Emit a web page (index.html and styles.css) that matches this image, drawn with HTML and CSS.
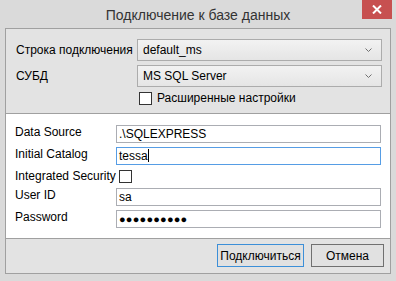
FILE: index.html
```html
<!DOCTYPE html>
<html lang="ru">
<head>
  <meta charset="UTF-8">
  <title>Подключение к базе данных</title>
  <link rel="stylesheet" href="styles.css">
</head>
<body>
  <div class="titlebar">
    <span></span>
    <span class="title">Подключение к базе данных</span>
    <span class="close">
      <svg width="10" height="9" viewBox="0 0 10 9"><path d="M1 0.5 L9 8.5 M9 0.5 L1 8.5" stroke="#fff" stroke-width="2"/></svg>
    </span>
  </div>

  <div class="frame">
    <div class="top">
      <label>Строка подключения</label>
      <div class="combo">default_ms
        <svg class="chev" width="7" height="4" viewBox="0 0 7 4"><path d="M0.5 0.5 L3.5 3.5 L6.5 0.5" stroke="#707070" fill="none"/></svg>
      </div>
      <label>СУБД</label>
      <div class="combo">MS SQL Server
        <svg class="chev" width="7" height="4" viewBox="0 0 7 4"><path d="M0.5 0.5 L3.5 3.5 L6.5 0.5" stroke="#707070" fill="none"/></svg>
      </div>
      <span></span>
      <div class="check-row"><span class="box"></span>Расширенные настройки</div>
    </div>

    <div class="params">
      <label>Data Source</label>
      <div class="field">.\SQLEXPRESS</div>
      <label>Initial Catalog</label>
      <div class="field focus">tessa<span class="caret"></span></div>
      <label>Integrated Security</label>
      <div><span class="box small"></span></div>
      <label>User ID</label>
      <div class="field">sa</div>
      <label>Password</label>
      <div class="field dots">●●●●●●●●●●</div>
    </div>

    <div class="buttons">
      <button class="btn primary">Подключиться</button>
      <button class="btn">Отмена</button>
    </div>
  </div>
</body>
</html>
```

FILE: styles.css
```css
body {
  margin: 0;
  background: #dadada;
  font-family: "Liberation Sans", Arial, sans-serif;
  font-size: 12px;
  color: #000;
}

.titlebar {
  display: grid;
  grid-template-columns: 1fr auto 1fr;
  height: 28px;
}

.title {
  font-size: 14px;
  color: #333;
  line-height: 30px;
}

.close {
  justify-self: end;
  margin-right: 4px;
  width: 30px;
  height: 19px;
  background: #c75050;
  display: flex;
  align-items: center;
  justify-content: center;
}

.frame {
  margin: 0 5px;
  border: 1px solid #a0a0a0;
  background: #e3e3e3;
}

label {
  white-space: nowrap;
}

.top {
  display: grid;
  grid-template-columns: 121px 245px;
  grid-template-rows: 22px 22px 14px;
  row-gap: 4px;
  padding: 10px 0 8px 10px;
  border-bottom: 1px solid #a0a0a0;
  align-items: center;
}

.combo {
  position: relative;
  height: 20px;
  border: 1px solid #acacac;
  background: linear-gradient(#f2f2f2, #e5e5e5);
  padding-left: 5px;
  line-height: 20px;
}

.chev {
  position: absolute;
  right: 9px;
  top: 8px;
}

.check-row {
  display: flex;
  align-items: center;
  gap: 5px;
  margin-left: 2px;
}

.box {
  display: inline-block;
  width: 11px;
  height: 11px;
  background: #fff;
  border: 1px solid #333;
}

.params {
  display: grid;
  grid-template-columns: 101px 265px;
  grid-template-rows: 18px 18px 15px 18px 18px;
  row-gap: 4px;
  padding: 11px 0 10px 9px;
  background: #fff;
  border-bottom: 1px solid #a0a0a0;
}

.params label {
  line-height: 14px;
}

.field {
  height: 16px;
  border: 1px solid #abadb3;
  padding-left: 2px;
  line-height: 17px;
}

.field.focus {
  border-color: #569de5;
}

.caret {
  display: inline-block;
  width: 1px;
  height: 13px;
  background: #000;
  vertical-align: -2px;
}

.dots {
  font-size: 11px;
  letter-spacing: 0.2px;
}

.box.small {
  margin-left: 3px;
  margin-top: 1px;
}

.buttons {
  display: flex;
  justify-content: flex-end;
  gap: 7px;
  padding: 5px 6px 6px 0;
}

.btn {
  height: 23px;
  font-family: inherit;
  font-size: 12px;
  background: #e1e1e1;
  border: 1px solid #707070;
  padding: 0;
  color: #000;
}

.btn.primary {
  width: 87px;
  border-color: #3c8fd8;
}

.btn:not(.primary) {
  width: 73px;
}
```
